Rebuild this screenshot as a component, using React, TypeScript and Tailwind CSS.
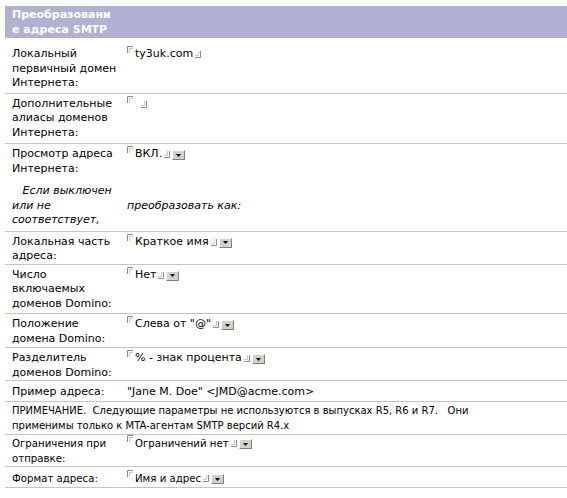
import type { ReactNode } from 'react';

// Lotus Notes style field delimiters
function StartMark() {
  return (
    <svg width="6" height="7" viewBox="0 0 6 7" className="shrink-0 mt-[-1px]">
      <path d="M0.5 7 V0.5 H6" fill="none" stroke="#8a8a8a" />
      <path d="M2.5 7 V2.5 H6" fill="none" stroke="#c8c8c8" />
    </svg>
  );
}

function EndMark() {
  return (
    <svg width="6" height="7" viewBox="0 0 6 7" className="shrink-0 self-end mb-[3px]">
      <path d="M0 6.5 H5.5 V0" fill="none" stroke="#8a8a8a" />
      <path d="M0 4.5 H3.5 V0" fill="none" stroke="#c8c8c8" />
    </svg>
  );
}

function DropButton() {
  return (
    <span className="ml-[2px] mt-[3px] flex h-[10px] w-[13px] shrink-0 items-center justify-center border border-t-white border-l-white border-b-[#808080] border-r-[#808080] bg-[#d4d0c8]">
      <svg width="5" height="3" viewBox="0 0 5 3">
        <path d="M0 0 H5 L2.5 3 Z" fill="#000" />
      </svg>
    </span>
  );
}

function Field({ value, drop }: { value?: string; drop?: boolean }) {
  return (
    <div className="flex items-start">
      <StartMark />
      <span className="ml-[2px] whitespace-pre">{value ?? ' '}</span>
      <span className="ml-[2px] flex h-[14px]">
        <EndMark />
      </span>
      {drop && <DropButton />}
    </div>
  );
}

function Row({
  label,
  children,
  last,
  className = '',
}: {
  label: ReactNode;
  children?: ReactNode;
  last?: boolean;
  className?: string;
}) {
  return (
    <div className={`flex ${last ? '' : 'border-b border-[#c4c4c4]'} ${className}`}>
      <div className="w-[122px] shrink-0 whitespace-nowrap pl-[7px]">{label}</div>
      <div className="flex-1">{children}</div>
    </div>
  );
}

export default function App() {
  return (
    <div className="min-h-screen bg-white pl-[5px] pt-[6px] font-['DejaVu_Sans',sans-serif] text-[11px] leading-[14.5px] text-black">
      {/* Section header */}
      <div className="h-[32px] bg-[#b1b1d3] pl-[7px] pt-[2px]">
        <div className="font-bold leading-[14.5px] text-white">
          Преобразовани
          <br />е адреса SMTP
        </div>
      </div>

      <div className="border-b border-[#c4c4c4] pb-[2px] pt-[9px]">
        <Row label={<>Локальный<br />первичный домен<br />Интернета:</>} last>
          <Field value="ty3uk.com" />
        </Row>
      </div>

      <Row className="py-[3px]" label={<>Дополнительные<br />алиасы доменов<br />Интернета:</>}>
        <Field />
      </Row>

      <div className="border-b border-[#c4c4c4] py-[3px]">
        <Row label={<>Просмотр адреса<br />Интернета:</>} last>
          <Field value="ВКЛ." drop />
        </Row>
        <div className="mt-[8px] flex items-center italic">
          <div className="w-[122px] shrink-0 whitespace-pre pl-[7px]">
            {'   Если выключен\nили не\nсоответствует,'}
          </div>
          <div>преобразовать как:</div>
        </div>
      </div>

      <Row className="pt-[3px]" label={<>Локальная часть<br />адреса:</>}>
        <Field value="Краткое имя" drop />
      </Row>
      <Row className="pt-[3px] pb-[2px]" label={<>Число<br />включаемых<br />доменов Domino:</>}>
        <Field value="Нет" drop />
      </Row>
      <Row className="pt-[3px] pb-[1px]" label={<>Положение<br />домена Domino:</>}>
        <Field value={'Слева от "@"'} drop />
      </Row>
      <Row className="pt-[3px]" label={<>Разделитель<br />доменов Domino:</>}>
        <Field value="% - знак процента" drop />
      </Row>
      <Row className="pt-[3px] pb-[2px] leading-[15px]" label="Пример адреса:">
        <div>"Jane M. Doe" &lt;JMD@acme.com&gt;</div>
      </Row>

      <div className="whitespace-pre border-b border-[#c4c4c4] pl-[7px] pt-[2px] pb-[1px] text-[10px] leading-[14.5px]">
        {'ПРИМЕЧАНИЕ.  Следующие параметры не используются в выпусках R5, R6 и R7.   Они\nприменимы только к MTA-агентам SMTP версий R4.x'}
      </div>

      <div className="text-[10.2px] leading-[15px]">
        <Row className="pt-[1px]" label={<>Ограничения при<br />отправке:</>}>
          <Field value="Ограничений нет" drop />
        </Row>
        <Row className="pt-[4px] pb-[1px]" label="Формат адреса:">
          <Field value="Имя и адрес" drop />
        </Row>
      </div>
    </div>
  );
}
